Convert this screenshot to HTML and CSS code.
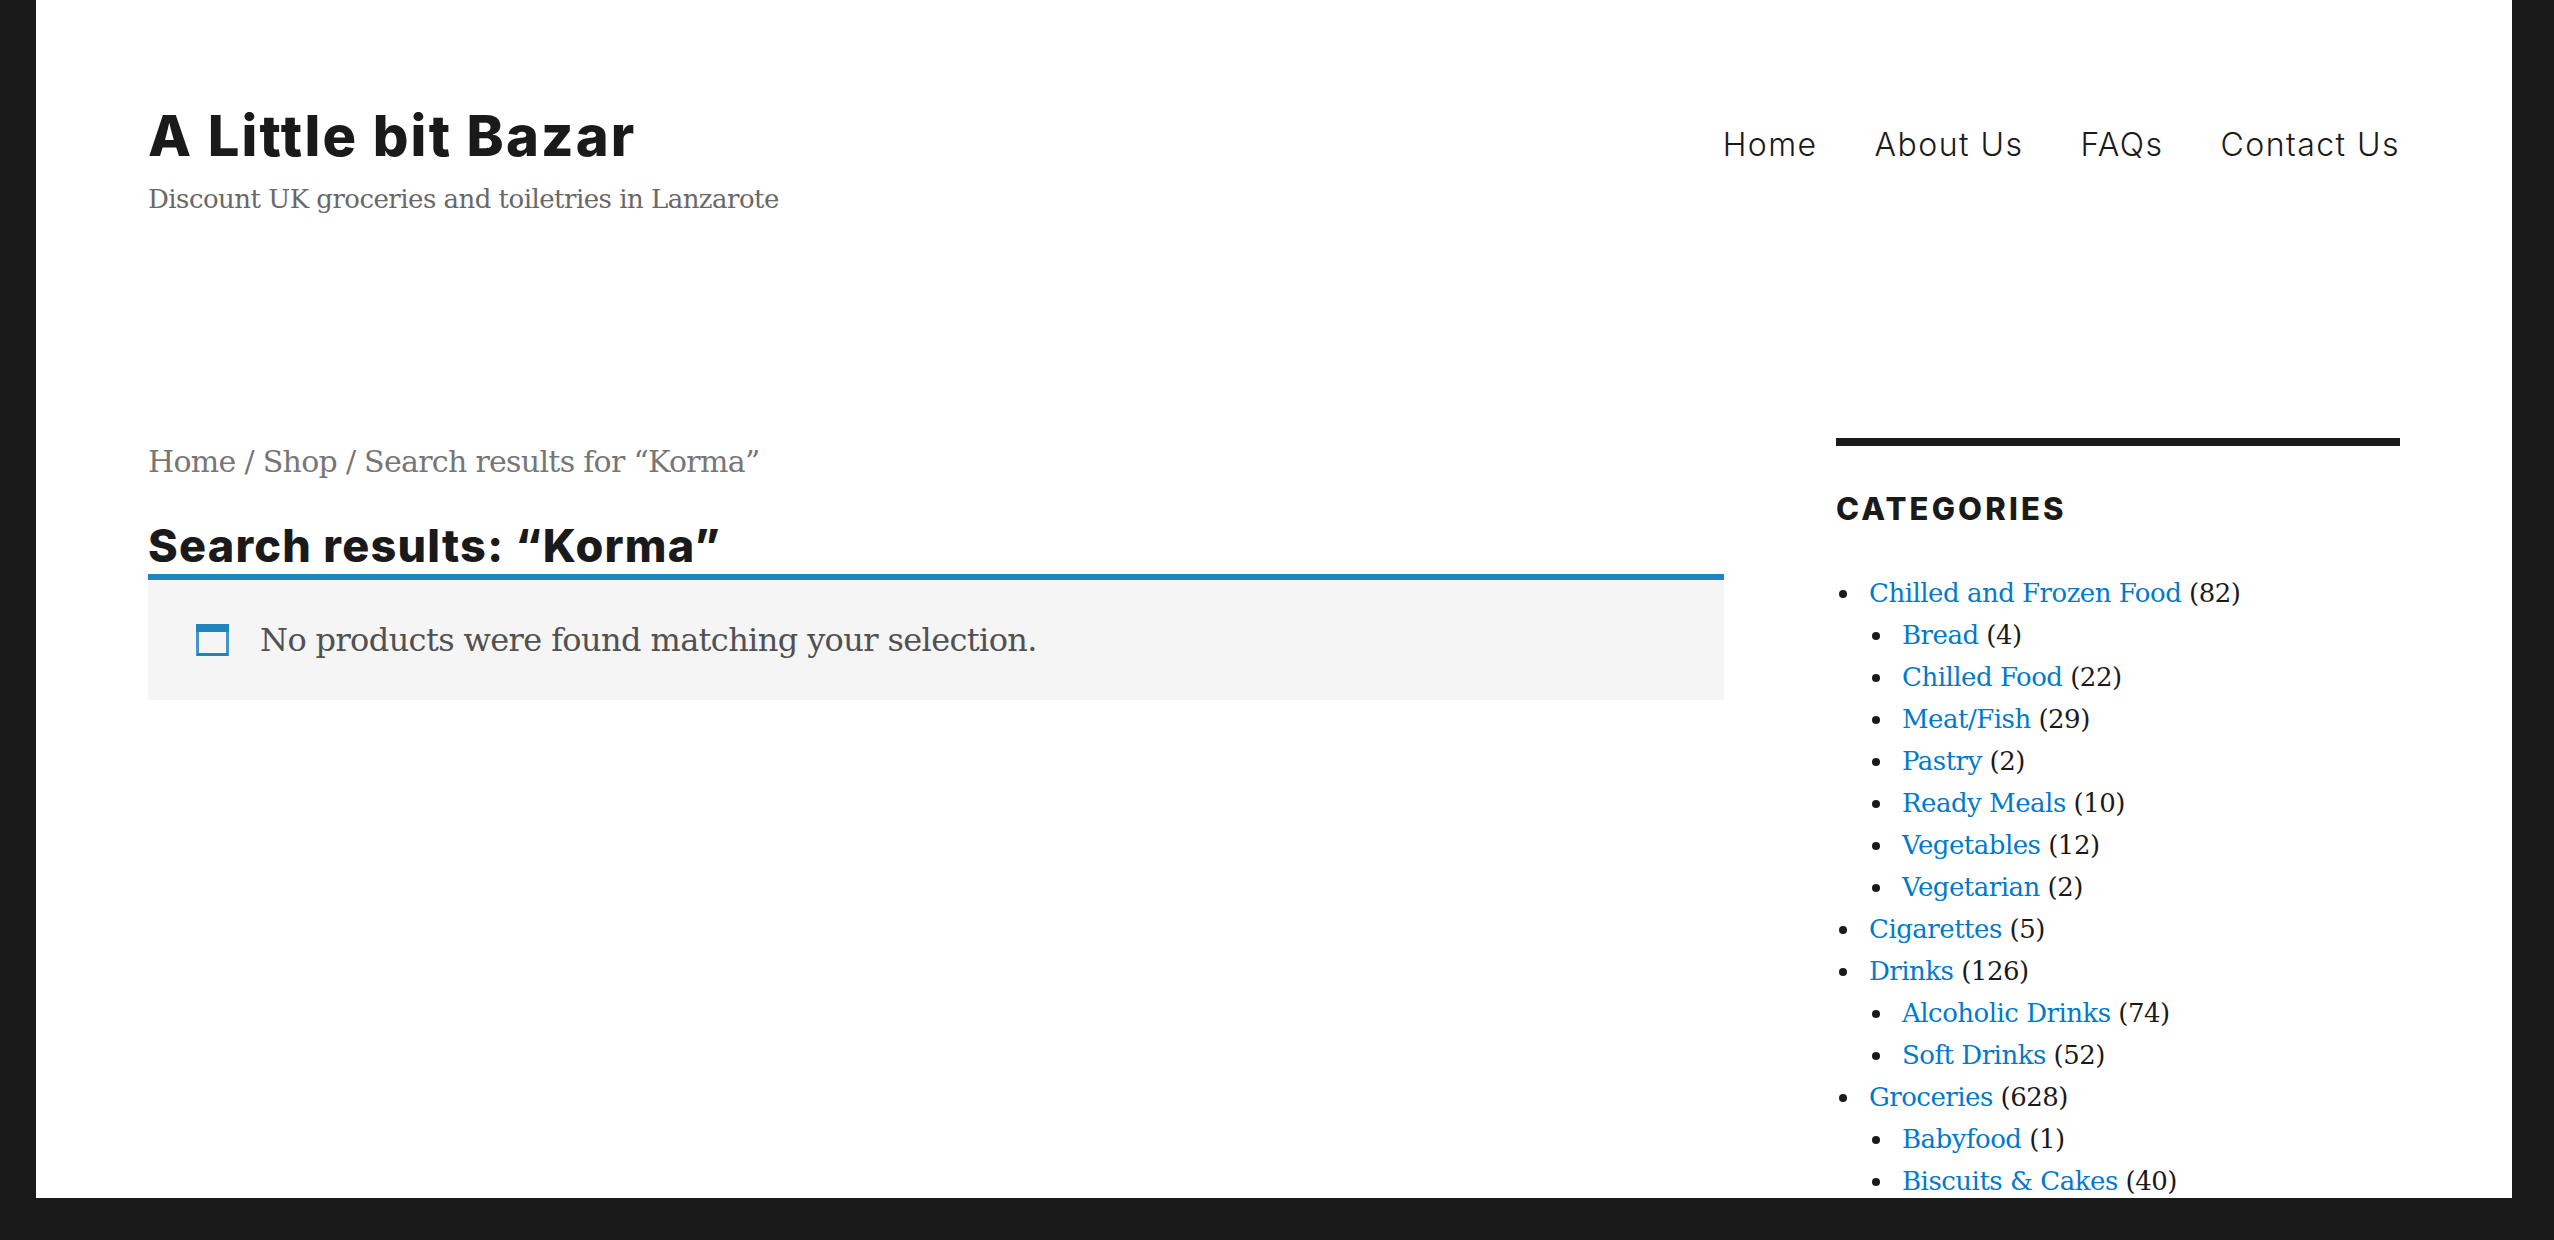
FILE: index.html
```html
<!DOCTYPE html>
<html lang="en">
<head>
  <meta charset="UTF-8" />
  <meta name="viewport" content="width=device-width, initial-scale=1" />
  <title>Search results: “Korma” – A Little bit Bazar</title>
  <link rel="stylesheet" href="styles.css">
</head>
<body>

  <div class="site">
    <header class="site-header">
      <div class="branding">
        <h1 class="site-title">A Little bit Bazar</h1>
        <p class="site-description">Discount UK groceries and toiletries in Lanzarote</p>
      </div>
      <nav class="main-nav">
        <a href="#">Home</a>
        <a href="#">About Us</a>
        <a href="#">FAQs</a>
        <a href="#">Contact Us</a>
      </nav>
    </header>

    <div class="site-content">
      <main class="content">
        <p class="breadcrumb">Home / Shop / Search results for “Korma”</p>
        <h2 class="page-title">Search results: “Korma”</h2>
        <div class="info">
          <svg class="info-icon" width="33" height="32" viewBox="0 0 33 32">
            <rect x="0" y="0" width="33" height="32" fill="#4396c8" />
            <rect x="0" y="0" width="33" height="8" fill="#1e85be" />
            <rect x="1" y="29" width="31" height="3" fill="#1e85be" />
            <rect x="3" y="8" width="27" height="21" fill="#f5f5f5" />
          </svg>
          <span>No products were found matching your selection.</span>
        </div>
      </main>

      <aside class="sidebar">
        <h2 class="widget-title">Categories</h2>
        <ul class="cats">
          <li><a href="#">Chilled and Frozen Food</a> (82)
            <ul>
              <li><a href="#">Bread</a> (4)</li>
              <li><a href="#">Chilled Food</a> (22)</li>
              <li><a href="#">Meat/Fish</a> (29)</li>
              <li><a href="#">Pastry</a> (2)</li>
              <li><a href="#">Ready Meals</a> (10)</li>
              <li><a href="#">Vegetables</a> (12)</li>
              <li><a href="#">Vegetarian</a> (2)</li>
            </ul>
          </li>
          <li><a href="#">Cigarettes</a> (5)</li>
          <li><a href="#">Drinks</a> (126)
            <ul>
              <li><a href="#">Alcoholic Drinks</a> (74)</li>
              <li><a href="#">Soft Drinks</a> (52)</li>
            </ul>
          </li>
          <li><a href="#">Groceries</a> (628)
            <ul>
              <li><a href="#">Babyfood</a> (1)</li>
              <li><a href="#">Biscuits &amp; Cakes</a> (40)</li>
            </ul>
          </li>
        </ul>
      </aside>
    </div>
  </div>

</body>
</html>
```

FILE: styles.css
```css
html, body {
  height: 100%;
}
body {
  margin: 0;
  padding: 0 42px 42px 36px;
  box-sizing: border-box;
  background: #1a1a1a;
  color: #1a1a1a;
  font-family: 'DejaVu Serif', 'Liberation Serif', serif;
  overflow: hidden;
}
a {
  text-decoration: none;
}
.site {
  height: 100%;
  padding: 0 112px;
  box-sizing: border-box;
  background: #fff;
  overflow: hidden;
}
.site-header {
  display: flex;
  justify-content: space-between;
  align-items: flex-start;
  padding-top: 101px;
  height: 438px;
  box-sizing: border-box;
}
.site-title {
  margin: 0;
  font-family: 'Inter', sans-serif;
  font-size: 56px;
  font-weight: 800;
  letter-spacing: 2.15px;
  line-height: 70px;
}
.site-description {
  margin: 7px 0 0;
  font-size: 26px;
  letter-spacing: -0.52px;
  line-height: 42px;
  color: #686868;
}
.main-nav {
  display: flex;
  gap: 57px;
  padding-top: 20px;
}
.main-nav a {
  font-family: 'Inter', sans-serif;
  font-size: 32px;
  font-weight: 300;
  letter-spacing: 1.45px;
  line-height: 48px;
  color: #1a1a1a;
}
.site-content {
  display: flex;
  justify-content: space-between;
}
.content {
  width: 1576px;
}
.breadcrumb {
  margin: 0;
  padding-top: 3px;
  font-size: 30px;
  letter-spacing: -0.7px;
  line-height: 42px;
  color: #767676;
}
.page-title {
  margin: 37px 0 0;
  font-family: 'Inter', sans-serif;
  font-size: 45px;
  font-weight: 800;
  letter-spacing: 1.25px;
  line-height: 52px;
}
.info {
  display: flex;
  align-items: center;
  gap: 31px;
  height: 120px;
  margin-top: 2px;
  padding-left: 48px;
  border-top: 6px solid #1e85be;
  background: #f5f5f5;
  color: #515151;
  font-size: 32px;
  letter-spacing: -0.62px;
}
.info-icon {
  flex: none;
}
.sidebar {
  width: 564px;
  border-top: 8px solid #1a1a1a;
}
.widget-title {
  margin: 41px 0 0;
  font-family: 'Inter', sans-serif;
  font-size: 31px;
  font-weight: 800;
  letter-spacing: 3.15px;
  line-height: 44px;
  text-transform: uppercase;
}
.cats {
  margin: 41px 0 0;
  padding: 0 0 0 33px;
  font-size: 26px;
  letter-spacing: -0.5px;
  line-height: 42px;
  list-style: none;
}
.cats ul {
  margin: 0;
  padding-left: 33px;
  list-style: none;
}
.cats li::before {
  content: "";
  display: inline-block;
  width: 8px;
  height: 8px;
  margin-left: -30px;
  margin-right: 22px;
  border-radius: 50%;
  background: #1a1a1a;
  vertical-align: 4px;
}
.cats a {
  color: #007acc;
}
```
